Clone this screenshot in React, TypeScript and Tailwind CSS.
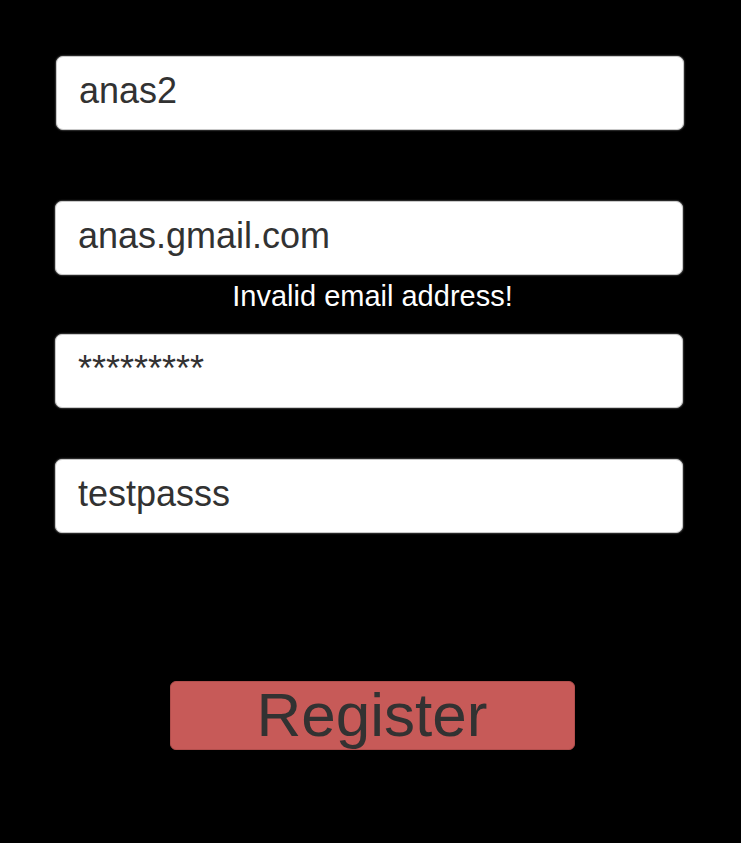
const fieldClass =
	"h-[74px] rounded-[7px] bg-white border border-[#c9c9c9] shadow-[0_0_2px_rgba(255,255,255,0.6)] pl-[22px] pt-[16px] text-[36px] leading-none text-[#323232] whitespace-nowrap overflow-hidden";

const App = () => {
	return (
		<div
			className="min-h-screen bg-black flex flex-col pl-[55px] pr-[58px] pt-[56px]"
			style={{ fontFamily: '"Liberation Sans", Arial, sans-serif' }}
		>
			{/* username */}
			<div className={`${fieldClass} ml-px -mr-px`}>anas2</div>

			{/* email */}
			<div className={`${fieldClass} mt-[71px]`}>anas.gmail.com</div>
			<p className="mt-[7px] h-[29px] text-center text-[29px] leading-none text-white pl-[7px]">
				Invalid email address!
			</p>

			{/* password */}
			<div className={`${fieldClass} mt-[23px]`}>*********</div>

			{/* confirm password */}
			<div className={`${fieldClass} mt-[51px]`}>testpasss</div>

			<div className="mt-[148px] flex justify-center pl-[6px]">
				<button
					type="button"
					className="w-[405px] h-[69px] rounded-[6px] bg-[#c75a58] border border-[#b24f4d] pt-[2px] flex justify-center items-start text-[62px] leading-none text-[#323232]"
				>
					Register
				</button>
			</div>
		</div>
	);
};

export default App;
